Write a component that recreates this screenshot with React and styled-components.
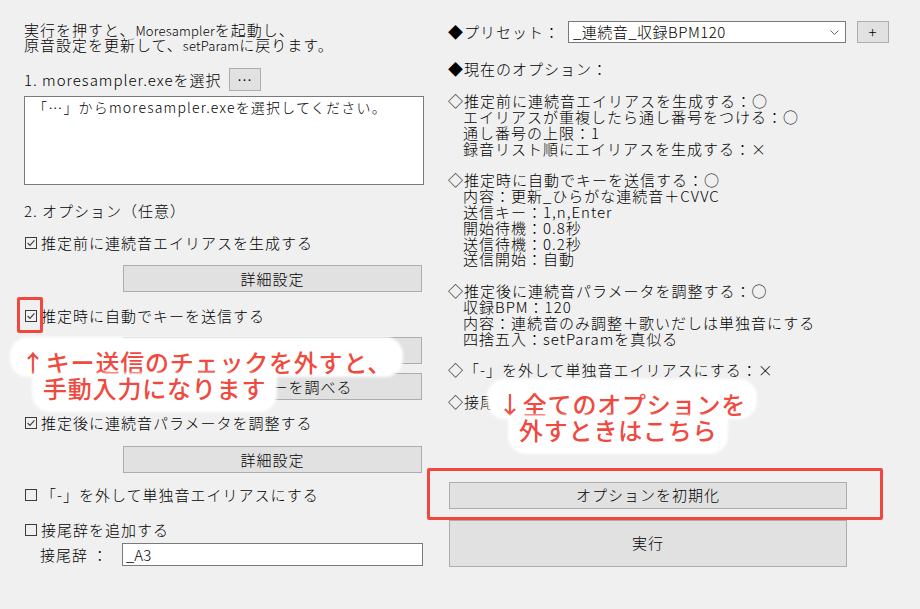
import React from 'react';
import styled, { createGlobalStyle } from 'styled-components';

const GlobalStyle = createGlobalStyle`
  html, body { margin: 0; padding: 0; }
  body {
    background: #f0f0f0;
    font-family: "Noto Sans CJK JP", "Noto Sans", sans-serif;
    color: #000;
  }
  #root { width: 920px; height: 609px; overflow: hidden; }
`;

const Window = styled.div`
  position: relative;
  width: 920px;
  height: 609px;
  box-sizing: border-box;
  background: #f0f0f0;
  display: grid;
  grid-template-columns: 400px 441px;
  column-gap: 24px;
  padding-left: 24px;
  font-size: 15px;
  font-weight: 300;
  letter-spacing: 1px;
  line-height: 16px;
  overflow: hidden;
`;

const Column = styled.div`
  display: flex;
  flex-direction: column;
  align-items: flex-start;
`;

const Intro = styled.div`
  margin-top: 22px;
  display: flex;
  flex-direction: column;
`;

const IntroLine = styled.div`
  height: 15px;
  line-height: 15px;
  white-space: pre;
  overflow: visible;
`;

const Latin = styled.span`
  font-size: 13px;
  line-height: 0;
  letter-spacing: 0.2px;
`;

const FileRow = styled.div`
  margin-top: 16px;
  height: 23px;
  display: flex;
  align-items: center;
`;

const FileLabel = styled.span`
  width: 205px;
`;

const Button = styled.button`
  box-sizing: border-box;
  width: ${p => p.$w}px;
  height: ${p => p.$h}px;
  margin-top: ${p => p.$mt || 0}px;
  margin-left: ${p => p.$ml || 0}px;
  background: #e1e1e1;
  border: 1px solid #adadad;
  border-radius: 0;
  padding: 0;
  font: inherit;
  letter-spacing: inherit;
  color: #000;
  display: flex;
  align-items: center;
  justify-content: center;
  flex-shrink: 0;
`;

const TextArea = styled.div`
  box-sizing: border-box;
  margin-top: 5px;
  width: 400px;
  height: 89px;
  background: #fff;
  border: 1px solid #7a7a7a;
  padding: 2px 3px 2px 8px;
  font-size: 14px;
  letter-spacing: 1.2px;
  line-height: 17px;
`;

const SectionLabel = styled.div`
  margin-top: ${p => p.$mt}px;
  height: 16px;
  white-space: pre;
`;

const CheckRow = styled.label`
  margin-top: ${p => p.$mt}px;
  height: 16px;
  display: flex;
  align-items: center;
  white-space: pre;
`;

const Box = styled.svg`
  margin-left: 1px;
  margin-right: 4px;
  flex-shrink: 0;
`;

const CheckBox = ({ checked }) => (
  <Box width="12" height="12" viewBox="0 0 12 12">
    <rect x="0.5" y="0.5" width="11" height="11" fill="none" stroke="#3c3c3c" strokeWidth="1" />
    {checked && (
      <polyline points="2.6,6 5,8.4 9.4,3.4" fill="none" stroke="#3c3c3c" strokeWidth="1.1" />
    )}
  </Box>
);

const SuffixRow = styled.div`
  margin-top: 5px;
  height: 23px;
  display: flex;
  align-items: center;
`;

const SuffixLabel = styled.span`
  width: 82px;
  padding-left: 16px;
  white-space: pre;
`;

const Input = styled.div`
  box-sizing: border-box;
  width: 301px;
  height: 23px;
  background: #fff;
  border: 1px solid #7a7a7a;
  padding: 2px 3px;
  letter-spacing: 0;
  line-height: 17px;
`;

const PresetRow = styled.div`
  margin-top: 21px;
  height: 22px;
  display: flex;
  align-items: center;
`;

const PresetLabel = styled.span`
  width: 120px;
  white-space: pre;
`;

const Select = styled.div`
  box-sizing: border-box;
  width: 278px;
  height: 22px;
  background: #fff;
  border: 1px solid #7a7a7a;
  padding: 0 6px 0 4px;
  display: flex;
  align-items: center;
  justify-content: space-between;
  margin-right: 11px;
`;

const SelectText = styled.span`
  letter-spacing: 0.5px;
`;

const OptionsBlock = styled.div`
  margin-top: 16px;
  line-height: 15.85px;
`;

const OptLine = styled.div`
  height: 15.85px;
  padding-left: ${p => (p.$indent ? 15 : 0)}px;
  white-space: pre;
`;

const RedFrame = styled.div`
  position: absolute;
  left: ${p => p.$x}px;
  top: ${p => p.$y}px;
  width: ${p => p.$w}px;
  height: ${p => p.$h}px;
  box-sizing: border-box;
  border: 3px solid #f2473f;
  border-radius: 2px;
  pointer-events: none;
`;

const Note = styled.div`
  position: absolute;
  left: ${p => p.$x}px;
  top: ${p => p.$y}px;
  display: flex;
  flex-direction: column;
  align-items: flex-start;
  font-size: 24px;
  line-height: 25px;
  letter-spacing: 0.8px;
  font-weight: 500;
  color: #f04a40;
  pointer-events: none;
`;

const NoteLine = styled.div`
  background: #fff;
  white-space: pre;
  padding: ${p => (p.$first ? '10px 9px 1px 9px' : '0 9px 10px 9px')};
  margin-left: ${p => p.$ml || 0}px;
  border-radius: ${p => (p.$first ? '16px' : '0 0 16px 16px')};
  box-shadow: 0 0 3px 2px #fff;
`;

const options = [
  ['◇推定前に連続音エイリアスを生成する：○', false],
  ['エイリアスが重複したら通し番号をつける：○', true],
  ['通し番号の上限：1', true],
  ['録音リスト順にエイリアスを生成する：×', true],
  ['', false],
  ['◇推定時に自動でキーを送信する：○', false],
  ['内容：更新_ひらがな連続音＋CVVC', true],
  ['送信キー：1,n,Enter', true],
  ['開始待機：0.8秒', true],
  ['送信待機：0.2秒', true],
  ['送信開始：自動', true],
  ['', false],
  ['◇推定後に連続音パラメータを調整する：○', false],
  ['収録BPM：120', true],
  ['内容：連続音のみ調整＋歌いだしは単独音にする', true],
  ['四捨五入：setParamを真似る', true],
  ['', false],
  ['◇「-」を外して単独音エイリアスにする：×', false],
  ['', false],
  ['◇接尾辞を追加する：×', false],
];

export default function App() {
  return (
    <>
      <GlobalStyle />
      <Window>
        <Column>
          <Intro>
            <IntroLine>実行を押すと、<Latin>Moresampler</Latin>を起動し、</IntroLine>
            <IntroLine>原音設定を更新して、<Latin>setParam</Latin>に戻ります。</IntroLine>
          </Intro>
          <FileRow>
            <FileLabel>1. moresampler.exeを選択</FileLabel>
            <Button $w={32} $h={23}>…</Button>
          </FileRow>
          <TextArea>「…」からmoresampler.exeを選択してください。</TextArea>
          <SectionLabel $mt={18}>2. オプション（任意）</SectionLabel>
          <CheckRow $mt={16}><CheckBox checked />推定前に連続音エイリアスを生成する</CheckRow>
          <Button $w={299} $h={27} $mt={14} $ml={99}>詳細設定</Button>
          <CheckRow $mt={16}><CheckBox checked />推定時に自動でキーを送信する</CheckRow>
          <Button $w={299} $h={27} $mt={13} $ml={99}>詳細設定</Button>
          <Button $w={299} $h={27} $mt={9} $ml={99}>送信するキーを調べる</Button>
          <CheckRow $mt={15}><CheckBox checked />推定後に連続音パラメータを調整する</CheckRow>
          <Button $w={299} $h={27} $mt={15} $ml={99}>詳細設定</Button>
          <CheckRow $mt={14}><CheckBox />「-」を外して単独音エイリアスにする</CheckRow>
          <CheckRow $mt={19}><CheckBox />接尾辞を追加する</CheckRow>
          <SuffixRow>
            <SuffixLabel>接尾辞 ：</SuffixLabel>
            <Input>_A3</Input>
          </SuffixRow>
        </Column>

        <Column>
          <PresetRow>
            <PresetLabel>◆プリセット：</PresetLabel>
            <Select>
              <SelectText>_連続音_収録BPM120</SelectText>
              <svg width="9" height="5" viewBox="0 0 9 5">
                <polyline points="0.5,0.5 4.5,4.5 8.5,0.5" fill="none" stroke="#666" strokeWidth="1" />
              </svg>
            </Select>
            <Button $w={32} $h={22}>+</Button>
          </PresetRow>
          <SectionLabel $mt={18}>◆現在のオプション：</SectionLabel>
          <OptionsBlock>
            {options.map(([text, indent], i) => (
              <OptLine key={i} $indent={indent}>{text}</OptLine>
            ))}
          </OptionsBlock>
          <Button $w={398} $h={27} $mt={72} $ml={1}>オプションを初期化</Button>
          <Button $w={398} $h={47} $mt={11} $ml={1}>実行</Button>
        </Column>

        <RedFrame $x={17} $y={297} $w={26} $h={36} />
        <RedFrame $x={427} $y={468} $w={456} $h={52} />

        <Note $x={12} $y={339}>
          <NoteLine $first>↑キー送信のチェックを外すと、</NoteLine>
          <NoteLine $ml={22}>手動入力になります</NoteLine>
        </Note>
        <Note $x={489} $y={381}>
          <NoteLine $first>↓全てのオプションを</NoteLine>
          <NoteLine $ml={21}>外すときはこちら</NoteLine>
        </Note>
      </Window>
    </>
  );
}
